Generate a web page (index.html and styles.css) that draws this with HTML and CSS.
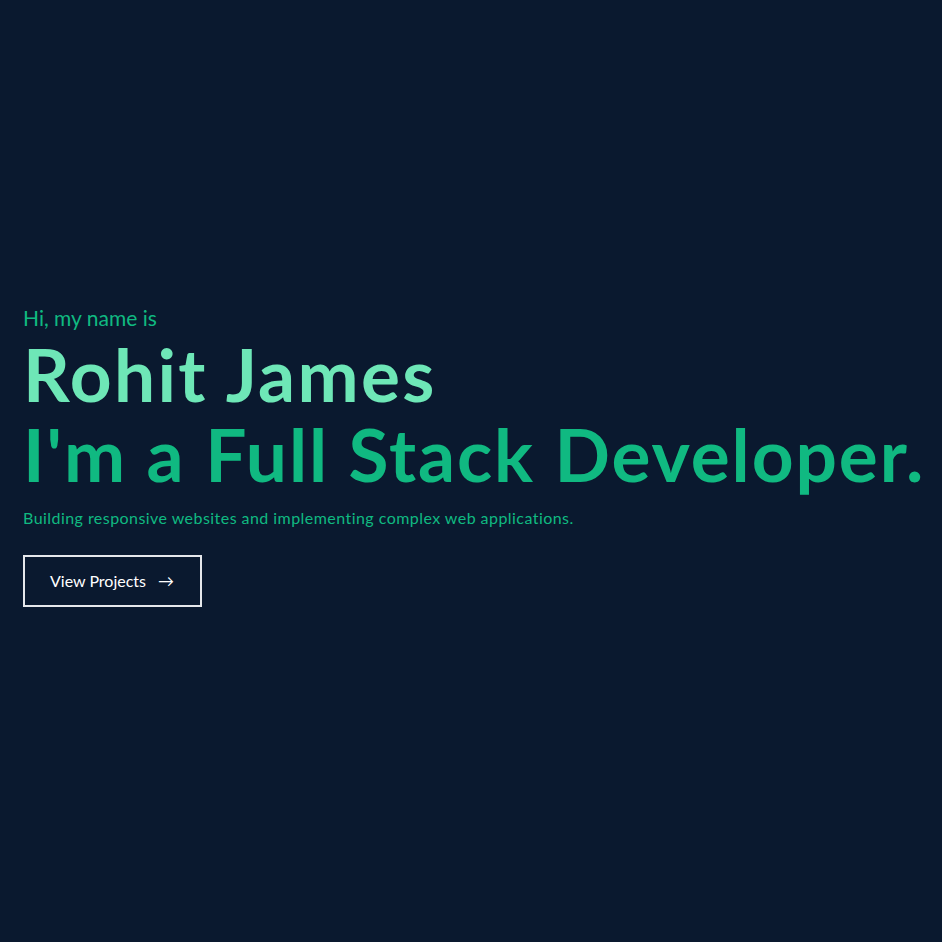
FILE: index.html
```html
<!DOCTYPE html>
<html lang="en">
<head>
<meta charset="utf-8">
<title>Rohit James</title>
<link rel="stylesheet" href="styles.css">
</head>
<body>
<main class="hero">
  <p class="hello">Hi, my name is</p>
  <h1 class="name">Rohit James</h1>
  <h2 class="role">I'm a Full Stack Developer.</h2>
  <p class="tagline">Building responsive websites and implementing complex web applications.</p>
  <a class="btn" href="#projects">View Projects <span class="arrow">&rarr;</span></a>
</main>
</body>
</html>
```
FILE: styles.css
```css
html, body {
  margin: 0;
  padding: 0;
  background: #0a192f;
}
body {
  font-family: "Lato", "Open Sans", sans-serif;
}
.hero {
  min-height: 100vh;
  box-sizing: border-box;
  display: flex;
  flex-direction: column;
  justify-content: center;
  align-items: flex-start;
  padding: 0 10px 32px 23px;
}
.hello {
  margin: 0;
  font-size: 21px;
  line-height: 28px;
  font-weight: 400;
  color: #10b981;
}
.name {
  margin: 2px 0 0;
  font-size: 73px;
  line-height: 80px;
  font-weight: 700;
  letter-spacing: 2.3px;
  white-space: nowrap;
  color: #6ee7b7;
}
.role {
  margin: 0;
  font-size: 73px;
  line-height: 80px;
  font-weight: 700;
  letter-spacing: 1.9px;
  white-space: nowrap;
  color: #10b981;
}
.tagline {
  margin: 12px 0 0;
  font-size: 16px;
  line-height: 24px;
  letter-spacing: 0.45px;
  color: #10b981;
}
.btn {
  margin-top: 25px;
  display: inline-flex;
  align-items: center;
  gap: 12px;
  height: 52px;
  box-sizing: border-box;
  padding: 0 26px 0 25px;
  border: 2px solid #e5e7eb;
  color: #ffffff;
  text-decoration: none;
  font-size: 16px;
}
.arrow {
  font-size: 16px;
}
```
